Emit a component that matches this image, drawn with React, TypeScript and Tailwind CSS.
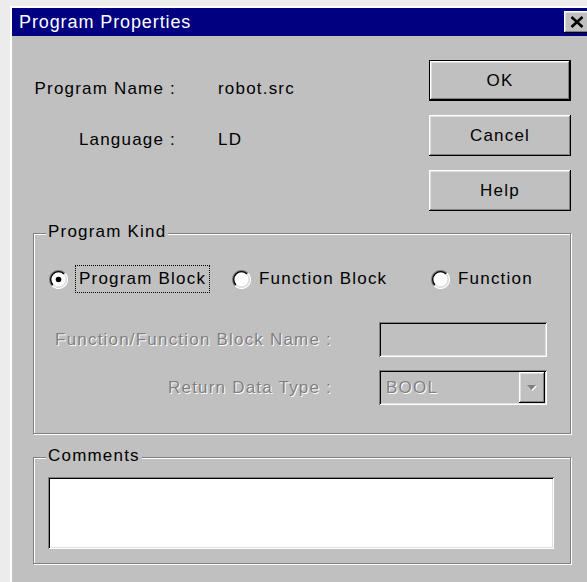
import React from "react";

// classic 3D bevels
const raised =
  "shadow-[inset_-1px_-1px_0_#000,inset_1px_1px_0_#fff,inset_-2px_-2px_0_#808080,inset_2px_2px_0_#dfdfdf]";
const sunken =
  "shadow-[inset_1px_1px_0_#808080,inset_-1px_-1px_0_#fff,inset_2px_2px_0_#000,inset_-2px_-2px_0_#dfdfdf]";
const etched = "border border-[#808080] shadow-[1px_1px_0_#fff,inset_1px_1px_0_#fff]";
const disabledText = "text-[#808080] [text-shadow:1px_1px_0_#fff]";

function Radio({ checked }: { checked?: boolean }) {
  return (
    <svg width="19" height="19" viewBox="0 0 17 17" className="shrink-0">
      <circle cx="8.5" cy="8.5" r="6.5" fill="#fff" />
      <path d="M2.84 14.16A8 8 0 0 1 14.16 2.84" fill="none" stroke="#808080" strokeWidth="1.2" />
      <path d="M14.16 2.84A8 8 0 0 1 2.84 14.16" fill="none" stroke="#fff" strokeWidth="1.2" />
      <path d="M3.55 13.45A7 7 0 0 1 13.45 3.55" fill="none" stroke="#000" strokeWidth="1.2" />
      <path d="M13.45 3.55A7 7 0 0 1 3.55 13.45" fill="none" stroke="#dfdfdf" strokeWidth="1.2" />
      {checked && <circle cx="8.5" cy="8.5" r="2.5" fill="#000" />}
    </svg>
  );
}

const Button: React.FC<{ label: string; isDefault?: boolean }> = ({ label, isDefault }) => {
  return (
    <div className={isDefault ? "border border-black" : ""}>
      <div
        className={`${raised} bg-[#c0c0c0] flex items-center justify-center ${
          isDefault ? "w-[140px] h-[39px]" : "w-[142px] h-[41px]"
        }`}
      >
        {label}
      </div>
    </div>
  );
};

const GroupBox: React.FC<{ title: string; className: string; children: React.ReactNode }> = ({
  title,
  className,
  children,
}) => {
  return (
    <div className={`relative ${etched} ${className}`}>
      <span className="absolute -top-[12px] left-[12px] px-[2px] bg-[#c0c0c0] leading-[20px]">{title}</span>
      {children}
    </div>
  );
};

export default function App() {
  return (
    <div className="w-[587px] h-[582px] overflow-hidden bg-[#ececec] pl-[10px] pt-[6px] font-['Liberation_Sans',Arial,sans-serif] text-black">
      <div className="w-[580px] h-[600px] border-l-2 border-t-2 border-white bg-[#c0c0c0] flex flex-col">
        {/* title bar */}
        <div className="h-[28px] bg-[#000080] flex items-center justify-between shrink-0">
          <span className="pl-[7px] text-white text-[18px] tracking-[0.9px]">Program Properties</span>
          <div className={`${raised} bg-[#c0c0c0] mr-[1px] w-[25px] h-[22px] flex items-center justify-center`}>
            <svg width="14" height="12" viewBox="0 0 14 12">
              <path d="M1.5 1L12.5 11M12.5 1L1.5 11" stroke="#000" strokeWidth="2.6" />
            </svg>
          </div>
        </div>

        <div className="pl-[21px] pr-[19px] text-[17px] tracking-[1.2px]">
          {/* name / language + buttons */}
          <div className="flex justify-between pt-[24px]">
            <div className="grid grid-cols-[143px_1fr] gap-x-[42px] content-start">
              <div className="h-[58px] flex items-center justify-end whitespace-nowrap">Program Name :</div>
              <div className="h-[58px] flex items-center">robot.src</div>
              <div className="h-[44px] flex items-center justify-end whitespace-nowrap">Language :</div>
              <div className="h-[44px] flex items-center">LD</div>
            </div>
            <div className="flex flex-col gap-[14px]">
              <Button label="OK" isDefault />
              <Button label="Cancel" />
              <Button label="Help" />
            </div>
          </div>

          {/* program kind */}
          <GroupBox title="Program Kind" className="mt-[22px] h-[201px] pt-[31px] pl-[15px] pr-[23px]">
            <div className="grid grid-cols-[183px_199px_1fr] h-[28px] items-center">
              <div className="flex items-center gap-[7px]">
                <Radio checked />
                <span className="border border-dotted border-black h-[28px] px-[3px] flex items-center whitespace-nowrap">
                  Program Block
                </span>
              </div>
              <div className="flex items-center gap-[8px]">
                <Radio />
                <span className="whitespace-nowrap">Function Block</span>
              </div>
              <div className="flex items-center gap-[8px]">
                <Radio />
                <span>Function</span>
              </div>
            </div>

            <div className="grid grid-cols-[1fr_168px] gap-x-[47px] gap-y-[13px] mt-[29px]">
              <div className={`h-[35px] flex items-center justify-end whitespace-nowrap ${disabledText}`}>
                Function/Function Block Name :
              </div>
              <div className={`h-[35px] bg-[#c0c0c0] ${sunken}`} />
              <div className={`h-[35px] flex items-center justify-end whitespace-nowrap ${disabledText}`}>
                Return Data Type :
              </div>
              <div className={`h-[35px] bg-[#c0c0c0] ${sunken} flex items-center p-[2px] pl-[7px]`}>
                <span className={`flex-1 ${disabledText}`}>BOOL</span>
                <div className={`${raised} bg-[#c0c0c0] w-[26px] h-full flex items-center justify-center`}>
                  <svg width="12" height="8" viewBox="0 0 12 8">
                    <path d="M2 2h9l-4.5 5z" fill="#fff" />
                    <path d="M1 1h9l-4.5 5z" fill="#808080" />
                  </svg>
                </div>
              </div>
            </div>
          </GroupBox>

          {/* comments */}
          <GroupBox title="Comments" className="mt-[23px] h-[107px] pt-[19px] pl-[14px] pr-[16px]">
            <div className={`h-[72px] bg-white ${sunken}`} />
          </GroupBox>
        </div>
      </div>
    </div>
  );
}
